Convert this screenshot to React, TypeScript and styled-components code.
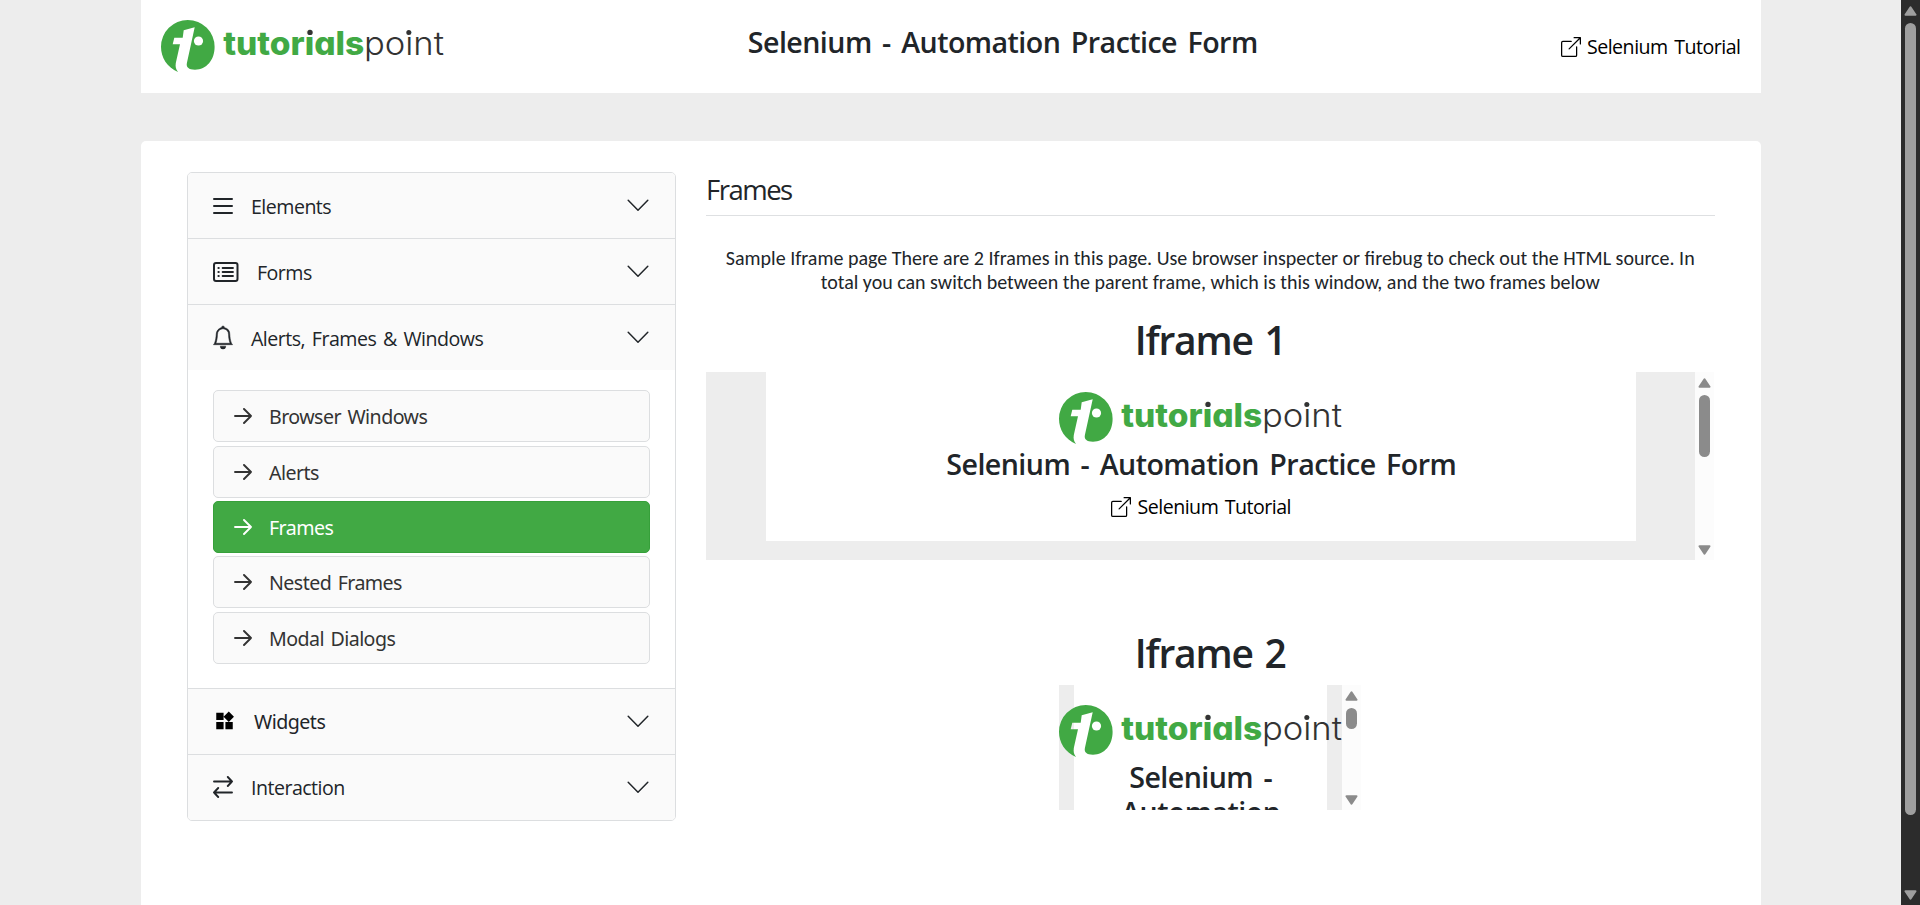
import React from 'react';
import styled, { createGlobalStyle } from 'styled-components';
import { BsBell, BsBoxArrowUpRight } from 'react-icons/bs';
import { MdWidgets } from 'react-icons/md';

const GlobalStyle = createGlobalStyle`
  *, *::before, *::after { box-sizing: border-box; }
  body {
    margin: 0;
    background: #ededed;
    color: #212529;
    font-family: "Open Sans", "Noto Sans", sans-serif;
    overflow: hidden;
  }
  h1, h2, p, ul { margin: 0; padding: 0; }
  svg { display: block; flex: none; }
`;

const Viewport = styled.div`
  display: flex;
  height: 905px;
  overflow: hidden;
`;

const Page = styled.div`
  flex: 1;
  min-width: 0;
  display: flex;
  flex-direction: column;
  align-items: center;
  gap: 48px;
`;

const Header = styled.header`
  width: 1620px;
  height: 93px;
  flex: none;
  padding: 20px 20px 0;
  display: flex;
  justify-content: space-between;
  align-items: flex-start;
  background: #fff;
`;

const PageTitle = styled.h1`
  font-size: 28.6px;
  font-weight: 600;
  line-height: 34.5px;
  letter-spacing: -0.55px;
  word-spacing: 3.6px;
  text-align: center;
`;

const HeaderTitle = styled(PageTitle)`
  margin-top: 5px;
`;

const TutorialLink = styled.a`
  display: flex;
  align-items: center;
  gap: 6px;
  color: #000;
  font-size: 19.6px;
  line-height: 30px;
  letter-spacing: -0.5px;
  word-spacing: 1.8px;
  white-space: nowrap;
`;

const HeaderLink = styled(TutorialLink)`
  margin-top: 12px;
`;

const Main = styled.main`
  width: 1620px;
  height: 780px;
  flex: none;
  display: flex;
  align-items: flex-start;
  gap: 30px;
  padding: 31px 46px 0 46.5px;
  background: #fff;
  border-radius: 5px;
`;

const Sidebar = styled.nav`
  width: 489px;
  flex: none;
  border: 1px solid #dcdee0;
  border-radius: 5px;
  overflow: hidden;
`;

const Section = styled.section`
  & + & { border-top: 1px solid #dcdee0; }
`;

const SectionHeader = styled.div`
  display: flex;
  align-items: center;
  height: 65px;
  padding: 0 26px 0 25px;
  background: #fafafa;
`;

const SectionLabel = styled.span<{ $noto?: boolean }>`
  flex: 1;
  margin-left: 18px;
  padding-top: 2px;
  font-family: ${p => (p.$noto ? '"Noto Sans"' : '"Open Sans"')}, sans-serif;
  font-size: 19.6px;
  line-height: 26px;
  letter-spacing: -0.52px;
  word-spacing: 2.2px;
`;

const SubList = styled.ul`
  display: flex;
  flex-direction: column;
  gap: 3.4px;
  padding: 20.2px 25px 24.2px;
  list-style: none;
`;

const SubItem = styled.li<{ $active?: boolean }>`
  display: flex;
  align-items: center;
  gap: 17px;
  height: 52px;
  padding: 0 20px;
  border: 1px solid ${p => (p.$active ? '#36a03a' : '#dcdee0')};
  border-radius: 5px;
  background: ${p => (p.$active ? '#41a944' : '#fafafa')};
  color: ${p => (p.$active ? '#fff' : '#333')};
  font-family: "Noto Sans", sans-serif;
  font-size: 19.6px;
  line-height: 26px;
  letter-spacing: -0.56px;
  word-spacing: 2px;
`;

const SubLabel = styled.span`
  padding-top: 2px;
`;

const Content = styled.article`
  flex: 1;
  min-width: 0;
  display: flex;
  flex-direction: column;
  align-items: center;
`;

const ContentTitle = styled.h1`
  align-self: stretch;
  height: 44px;
  border-bottom: 1px solid #dee0e2;
  font-size: 27.5px;
  font-weight: 400;
  line-height: 36px;
  letter-spacing: -1.5px;
`;

const Intro = styled.p`
  margin-top: 30px;
  padding: 0 8px;
  font-family: Carlito, Lato, sans-serif;
  font-size: 20px;
  line-height: 24px;
  text-align: center;
`;

const FrameTitle = styled.h2<{ $top: number }>`
  margin-top: ${p => p.$top}px;
  font-size: 39px;
  font-weight: 600;
  line-height: 48px;
  letter-spacing: -1.2px;
  word-spacing: 2.8px;
`;

const Frame = styled.div<{ $width: number; $height: number }>`
  display: flex;
  width: ${p => p.$width}px;
  height: ${p => p.$height}px;
  margin-top: 8px;
  overflow: hidden;
  background: #ededed;
`;

const FrameBody = styled.div<{ $left: number; $right: number }>`
  flex: 1;
  min-width: 0;
  padding: 0 ${p => p.$right}px 0 ${p => p.$left}px;
`;

const FrameHeader = styled.div`
  display: flex;
  flex-direction: column;
  align-items: center;
  height: 169px;
  padding-top: 20px;
  background: #fff;
`;

const FramePageTitle = styled(PageTitle)`
  margin-top: 2px;
`;

const FrameLink = styled(TutorialLink)`
  margin-top: 10px;
`;

const Track = styled.div<{ $dark?: boolean }>`
  width: 19px;
  flex: none;
  display: flex;
  flex-direction: column;
  align-items: center;
  padding: 6px 0 5px;
  background: ${p => (p.$dark ? '#2c2c2c' : '#fcfcfc')};
  color: ${p => (p.$dark ? '#9f9f9f' : '#8b8b8b')};
`;

const Thumb = styled.div<{ $size: number }>`
  width: 11px;
  height: ${p => p.$size}px;
  margin: 7px 0 auto;
  border-radius: 6px;
  background: currentColor;
`;

function Scrollbar({ size, dark }: { size: number; dark?: boolean }) {
  return (
    <Track $dark={dark}>
      <svg width="13" height="10" viewBox="0 0 13 10" fill="currentColor" stroke="currentColor" strokeWidth="2" strokeLinejoin="round">
        <path d="M6.5 1.3 11.5 8.7H1.5Z" />
      </svg>
      <Thumb $size={size} />
      <svg width="13" height="10" viewBox="0 0 13 10" fill="currentColor" stroke="currentColor" strokeWidth="2" strokeLinejoin="round">
        <path d="M6.5 8.7 1.5 1.3H11.5Z" />
      </svg>
    </Track>
  );
}

const LogoType = styled.text<{ $light?: boolean }>`
  font-family: Inter, sans-serif;
  font-feature-settings: "cv11";
  font-size: 32px;
  font-weight: ${p => (p.$light ? 300 : 800)};
  fill: ${p => (p.$light ? '#333' : '#41a944')};
`;

function Logo() {
  return (
    <svg width="284" height="53" viewBox="0 0 284 53">
      <path
        fill="#41a944"
        d="M17 52C6 47.5 0 37.5 0 26.8A26.8 26.8 0 0 1 53.6 26.8C53.6 40 45.5 49.7 34 49.7C27.5 49.7 25 47 25.9 43L33.7 7.3 22.7 10.3 21.7 17.7H13.3L11.7 24.3H19L14.8 43C14.2 47 15 49.5 17 52Z"
      />
      <circle cx="37.5" cy="21" r="4.6" fill="#fff" />
      <LogoType x="62.3" y="35" textLength="141" lengthAdjust="spacingAndGlyphs">tutorials</LogoType>
      <LogoType x="203" y="35" textLength="80" lengthAdjust="spacingAndGlyphs" $light>point</LogoType>
      <circle cx="148.6" cy="12.8" r="3.5" fill="#fff" />
      <circle cx="149" cy="12.4" r="2.7" fill="#333" />
      <circle cx="247.8" cy="12.6" r="2.5" fill="#333" />
    </svg>
  );
}

const ChevronDown = () => (
  <svg width="22" height="13" viewBox="0 0 22 13" fill="none" stroke="currentColor" strokeWidth="1.5" strokeLinecap="round" strokeLinejoin="round">
    <path d="M1.2 1.3 11 11.2 20.8 1.3" />
  </svg>
);

const ArrowRight = () => (
  <svg width="18" height="16" viewBox="0 0 18 16" fill="none" stroke="currentColor" strokeWidth="1.9" strokeLinecap="round" strokeLinejoin="round">
    <path d="M1 8H17M10 1 17 8 10 15" />
  </svg>
);

const LinesIcon = () => (
  <svg width="20" height="18" viewBox="0 0 20 18" fill="none" stroke="currentColor" strokeWidth="2" strokeLinecap="round">
    <path d="M1 2H19M1 9H19M1 16H19" />
  </svg>
);

const FormIcon = () => (
  <svg width="26" height="20" viewBox="0 0 26 20" fill="none" stroke="currentColor" strokeLinecap="round">
    <rect x="1" y="1" width="23.5" height="18" rx="2" strokeWidth="2" />
    <path strokeWidth="1.8" d="M9.6 6H20M9.6 10H20M9.6 14H20" />
    <path strokeWidth="2.2" d="M5.5 6h.2M5.5 10h.2M5.5 14h.2" />
  </svg>
);

const SwapIcon = () => (
  <svg width="20" height="22" viewBox="0 0 20 22" fill="none" stroke="currentColor" strokeWidth="1.9" strokeLinecap="round" strokeLinejoin="round">
    <path d="M1 5.5H19M14.8 1 19 5.5 14.8 10M19 16.5H1M5.2 12 1 16.5 5.2 21" />
  </svg>
);

const BellIcon = styled(BsBell)`
  width: 22px;
  height: 23px;
  margin: 0 -1px;
  overflow: visible;
  stroke: currentColor;
  stroke-width: 0.35;
`;

const WidgetsIcon = styled(MdWidgets)`
  width: 23px;
  height: 22px;
  color: #000;
`;

const LINKS = ['Browser Windows', 'Alerts', 'Frames', 'Nested Frames', 'Modal Dialogs'];

const SECTIONS = [
  { label: 'Elements', icon: <LinesIcon /> },
  { label: 'Forms', icon: <FormIcon /> },
  { label: 'Alerts, Frames & Windows', icon: <BellIcon preserveAspectRatio="none" />, links: LINKS },
  { label: 'Widgets', icon: <WidgetsIcon />, noto: true },
  { label: 'Interaction', icon: <SwapIcon /> },
];

function PracticeFrame({ width, height, left, right, thumb }: { width: number; height: number; left: number; right: number; thumb: number }) {
  return (
    <Frame $width={width} $height={height}>
      <FrameBody $left={left} $right={right}>
        <FrameHeader>
          <Logo />
          <FramePageTitle>Selenium - Automation Practice Form</FramePageTitle>
          <FrameLink>
            <BsBoxArrowUpRight size={20} />
            Selenium Tutorial
          </FrameLink>
        </FrameHeader>
      </FrameBody>
      <Scrollbar size={thumb} />
    </Frame>
  );
}

export default function App() {
  return (
    <Viewport>
      <GlobalStyle />
      <Page>
        <Header>
          <Logo />
          <HeaderTitle>Selenium - Automation Practice Form</HeaderTitle>
          <HeaderLink>
            <BsBoxArrowUpRight size={20} />
            Selenium Tutorial
          </HeaderLink>
        </Header>
        <Main>
          <Sidebar>
            {SECTIONS.map(s => (
              <Section key={s.label}>
                <SectionHeader>
                  {s.icon}
                  <SectionLabel $noto={s.noto}>{s.label}</SectionLabel>
                  <ChevronDown />
                </SectionHeader>
                {s.links && (
                  <SubList>
                    {s.links.map(l => (
                      <SubItem key={l} $active={l === 'Frames'}>
                        <ArrowRight />
                        <SubLabel>{l}</SubLabel>
                      </SubItem>
                    ))}
                  </SubList>
                )}
              </Section>
            ))}
          </Sidebar>
          <Content>
            <ContentTitle>Frames</ContentTitle>
            <Intro>
              Sample Iframe page There are 2 Iframes in this page. Use browser inspecter or firebug to check out the HTML
              source. In total you can switch between the parent frame, which is this window, and the two frames below
            </Intro>
            <FrameTitle $top={22}>Iframe 1</FrameTitle>
            <PracticeFrame width={1008} height={188} left={60} right={59} thumb={62} />
            <FrameTitle $top={69}>Iframe 2</FrameTitle>
            <PracticeFrame width={302} height={125} left={15} right={15} thumb={21} />
          </Content>
        </Main>
      </Page>
      <Scrollbar size={792} dark />
    </Viewport>
  );
}
